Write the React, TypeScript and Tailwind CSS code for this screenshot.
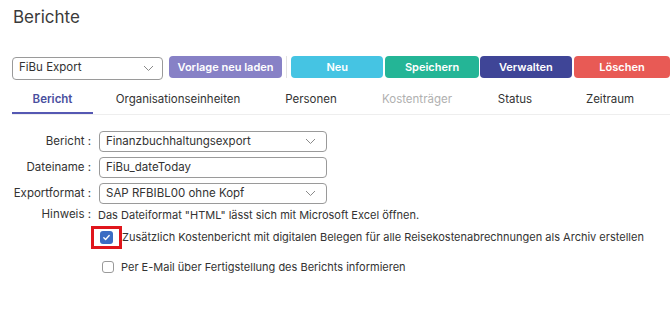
import React from "react";

function Chevron({ className = "" }: { className?: string }) {
  return (
    <svg className={className} width="11" height="7" viewBox="0 0 11 7" fill="none">
      <path d="M1 1l4.5 4.5L10 1" stroke="#8a8a8a" strokeWidth="1" />
    </svg>
  );
}

function SelectBox({ value, w }: { value: string; w: string }) {
  return (
    <div className={`${w} h-full flex items-center justify-between border border-[#9a9a9a] rounded-[4px] pl-[6px] pr-[10px] bg-white`}>
      <span>{value}</span>
      <Chevron />
    </div>
  );
}

export default function App() {
  const tabs = [
    { t: "Bericht", w: "w-[81px]", active: true },
    { t: "Organisationseinheiten", w: "w-[170px]" },
    { t: "Personen", w: "w-[96px]" },
    { t: "Kostenträger", w: "w-[116px]", disabled: true },
    { t: "Status", w: "w-[80px]" },
    { t: "Zeitraum", w: "w-[110px]" },
  ];
  return (
    <div
      className="w-[670px] h-[317px] bg-white text-[#333333] overflow-hidden whitespace-nowrap"
      style={{ fontFamily: "Inter, 'Noto Sans', sans-serif" }}
    >
      <div className="pl-[13px] pt-[5px] text-[17px] leading-[24px] text-[#3a3a3a]">Berichte</div>

      <div className="flex items-center mt-[26px] pl-[12px] h-[24px] text-[11px]">
        <div className="w-[152px] h-[23px] mt-[2px] flex items-center justify-between border border-[#9a9a9a] rounded-[4px] pl-[6px] pr-[8px] bg-white text-[#333] text-[11.5px]">
          <span>FiBu Export</span>
          <Chevron />
        </div>
        <button className="ml-[6px] w-[114px] h-[22px] rounded-[4px] bg-[#8781c6] text-white font-semibold text-[11px]">
          Vorlage neu laden
        </button>
        <div className="ml-[4px] w-px h-[22px] bg-[#e2e2e2]" />
        <button className="ml-[4px] w-[93px] h-[22px] rounded-[4px] bg-[#45c4e3] text-white font-semibold text-[11px]">
          Neu
        </button>
        <button className="ml-[2px] w-[94px] h-[22px] rounded-[4px] bg-[#24b596] text-white font-semibold text-[11px]">
          Speichern
        </button>
        <button className="ml-[1px] w-[93px] h-[22px] rounded-[4px] bg-[#3f4597] text-white font-semibold text-[11px]">
          Verwalten
        </button>
        <button className="ml-[2px] w-[96px] h-[22px] rounded-[4px] bg-[#e85a55] text-white font-semibold text-[11px] shrink-0">
          Löschen
        </button>
      </div>

      <div className="ml-[12px] mt-[9px] flex border-b border-[#eeeeee] text-[11.5px]">
        {tabs.map((tab) => (
          <div
            key={tab.t}
            className={`${tab.w} shrink-0 h-[26px] flex items-center justify-center ${
              tab.active
                ? "border-b-2 border-[#5558b3] text-[#4a4f9e] font-semibold"
                : "border-b-2 border-transparent"
            } ${tab.disabled ? "text-[#b0b0b0]" : ""}`}
          >
            {tab.t}
          </div>
        ))}
      </div>

      <div className="mt-[16px] pl-[12px] text-[11.5px] flex flex-col">
        <div className="flex items-center h-[21px]">
          <div className="w-[80px] text-right pr-[1px]">Bericht :</div>
          <div className="ml-[7px] h-full">
            <SelectBox value="Finanzbuchhaltungsexport" w="w-[228px]" />
          </div>
        </div>
        <div className="flex items-center h-[21px] mt-[5px]">
          <div className="w-[80px] text-right pr-[1px]">Dateiname :</div>
          <div className="ml-[7px] h-full w-[228px] flex items-center border border-[#9a9a9a] rounded-[4px] pl-[6px]">
            FiBu_dateToday
          </div>
        </div>
        <div className="flex items-center h-[21px] mt-[5px]">
          <div className="w-[80px] text-right pr-[1px]">Exportformat :</div>
          <div className="ml-[7px] h-full">
            <SelectBox value="SAP RFBIBL00 ohne Kopf" w="w-[228px]" />
          </div>
        </div>
        <div className="flex items-center h-[16px] mt-[3px] text-[11px]">
          <div className="w-[80px] text-right pr-[1px] text-[11.5px]">Hinweis :</div>
          <div className="ml-[6px]">Das Dateiformat "HTML" lässt sich mit Microsoft Excel öffnen.</div>
        </div>
        <div className="flex items-center mt-[3px] h-[23px] text-[11px]">
          <div className="ml-[79px] w-[31px] h-[23px] border-[3px] border-[#e0161c] flex items-center justify-center">
            <div className="w-[13px] h-[13px] rounded-[3px] bg-[#3b6cc3] flex items-center justify-center">
              <svg width="9" height="9" viewBox="0 0 10 10" fill="none">
                <path d="M2 5.2l2 2L8 2.8" stroke="white" strokeWidth="1.5" strokeLinecap="round" strokeLinejoin="round" />
              </svg>
            </div>
          </div>
          <div className="ml-[0px]">
            Zusätzlich Kostenbericht mit digitalen Belegen für alle Reisekostenabrechnungen als Archiv erstellen
          </div>
        </div>
        <div className="flex items-center mt-[10px] h-[16px] text-[11px]">
          <div className="ml-[90px] w-[12px] h-[12px] rounded-[3px] border border-[#9a9a9a] bg-white" />
          <div className="ml-[7px]">Per E-Mail über Fertigstellung des Berichts informieren</div>
        </div>
      </div>
    </div>
  );
}
